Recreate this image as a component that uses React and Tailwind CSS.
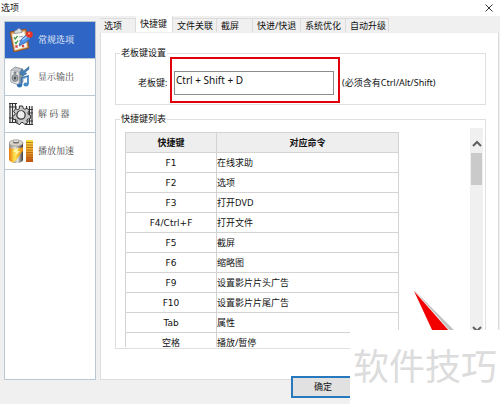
import { useState } from "react";

const ClipboardIcon = () => (
  <svg viewBox="0 0 24 24" className="w-6 h-6 shrink-0">
    <path d="M1 4 17 1 20 20 5 24Z" fill="#d38b48" stroke="#8a4c1c" strokeWidth=".8" />
    <path d="M3 6 15.5 3.500 18 19 6 22Z" fill="#fbfbf5" stroke="#ead2ae" strokeWidth=".6" />
    <path d="M5 5.500 6 2.500 8 2 9 .3 11 .8 12.500 2.500 13 4.500Z" fill="#dcdfe2" stroke="#747982" strokeWidth=".6" />
    <path d="m5 9.500 1.200 1.500L8.500 8M6 14l1 1.500 2-3" fill="none" stroke="#3e9c4c" strokeWidth="1.300" />
    <path d="m6.500 17.500 2 2m0-2-2 2M13 17l2 2m0-2-2 2" stroke="#d23c3c" strokeWidth="1.200" />
    <path d="m10 9 4-.8M10 13l2-.4M10 18l2-.4" stroke="#8e98a5" strokeWidth=".9" />
    <path d="m10 17.500 2.500-6.500 6-5 3.500 4.500-6 4.500Z" fill="#4f93ea" stroke="#2458a8" strokeWidth=".7" />
    <path d="m13.500 12 5.500-4.500" stroke="#a9d0fb" strokeWidth="1.400" />
    <circle cx="20.500" cy="6.500" r="3.300" fill="#ea3428" />
    <circle cx="20" cy="5.500" r="1.100" fill="#ff9384" />
  </svg>
);

const SpeakerIcon = () => (
  <svg viewBox="0 0 24 24" className="w-6 h-6 shrink-0">
    <path d="m2 5 4-3 8 2v13l-4 3-8-3Z" fill="#c3c6ca" stroke="#7b8086" strokeWidth=".7" />
    <path d="m2 5 8 2v13l-8-3Z" fill="#e2e4e6" stroke="#90959a" strokeWidth=".5" />
    <path d="m10 7 4-3v13l-4 3Z" fill="#989da3" />
    <ellipse cx="6" cy="13" rx="3" ry="3.500" fill="#a1a6ac" stroke="#5d6268" strokeWidth=".6" />
    <ellipse cx="6" cy="13" rx="1.200" ry="1.500" fill="#4b5056" />
    <ellipse cx="6" cy="7.800" rx="1.500" ry="1.200" fill="#7d8389" />
    <path d="m11 9 1.500-5 2 2L20 1.500v2.700l-4 3.300 2 1-4 2.500Z" fill="#4681b4" stroke="#285b8c" strokeWidth=".4" />
    <path d="M12.500 20v-7l6.500-2v8" fill="none" stroke="#3475b5" strokeWidth="1.600" />
    <ellipse cx="10.500" cy="20.500" rx="2.600" ry="1.900" fill="#2f70b2" />
    <ellipse cx="17" cy="19.500" rx="2.600" ry="1.900" fill="#4589c7" />
    <path d="m13.500 14 5-1.500" stroke="#8bc0e8" strokeWidth=".8" />
  </svg>
);

const FilmIcon = () => (
  <svg viewBox="0 0 24 24" className="w-6 h-6 shrink-0">
    <g fill="none" stroke="#333" strokeWidth="1.200">
      <path d="M1 1v20M3.500 1v20M6.500 1v20M17.500 4v19M20.500 4v19M23 4v19" />
      <path d="M0 1.500h8M0 5h8M0 16h8M0 20.500h8M16 7.500h8M16 11h8M16 19h8M16 22.500h8" />
    </g>
    <path
      d="m10.300 4 3.400 0 .5 2.400 1.700.8 2.200-1 2.200 2.500-1.400 2 .5 1.800 2.400 1-.5 3.200-2.500.2-1 1.500.8 2.300-2.900 1.700-1.700-1.900-1.800.1-1.500 2-3-1.300.4-2.500-1.200-1.400-2.500.1-.8-3.200 2.200-1.200.3-1.800-1.500-2 2-2.600 2.300.9 1.500-1Z"
      fill="#c9c9c9"
      stroke="#333"
      strokeWidth="1"
    />
    <circle cx="12" cy="13" r="4.200" fill="#eee" stroke="#333" strokeWidth="1.200" />
    <path d="m9.500 10.500 2-1.200 2.800 1" fill="none" stroke="#fff" strokeWidth="1" />
  </svg>
);

const BatteryIcon = () => (
  <svg viewBox="0 0 24 24" className="w-6 h-6 shrink-0">
    <defs>
      <linearGradient id="cell">
        <stop offset="0" stopColor="#e8780f" />
        <stop offset=".4" stopColor="#ffe34d" />
        <stop offset="1" stopColor="#e88a12" />
      </linearGradient>
      <linearGradient id="metal">
        <stop offset="0" stopColor="#8a8a8a" />
        <stop offset=".45" stopColor="#e4e4e4" />
        <stop offset="1" stopColor="#3b3b3b" />
      </linearGradient>
      <linearGradient id="level" x2="0" y2="1">
        <stop offset="0" stopColor="#f6e03b" />
        <stop offset=".5" stopColor="#eda62b" />
        <stop offset="1" stopColor="#c95012" />
      </linearGradient>
    </defs>
    <path d="M0 4v17c2 4 12 4 14 0V4Z" fill="url(#cell)" />
    <path d="M0 4c3 3 11 3 14 0v4c-4 2-10 2-14 1Z" fill="url(#metal)" />
    <path d="M14 12v9c-2 4-8 3.500-10 2.500C8 22 9 17 14 12Z" fill="url(#metal)" />
    <ellipse cx="7" cy="4" rx="7" ry="3.200" fill="#d8d4cb" stroke="#8d8577" strokeWidth=".6" />
    <ellipse cx="7" cy="3" rx="3" ry="1.600" fill="#666" />
    <ellipse cx="7" cy="2.300" rx="2.500" ry="1" fill="#ddd" />
    <path d="m6 10 4-1-2 3h3l-5 5 1-4H4Z" fill="#fff6a8" />
    <path d="M17 1h7v22h-7Z" fill="url(#level)" />
    <path d="M17 3.500h7M17 6h7M17 8.500h7M17 11h7M17 13.500h7M17 16h7M17 18.500h7M17 21h7" stroke="#a35a12" strokeWidth=".7" />
  </svg>
);

const sections = [
  { name: "常规选项", icon: ClipboardIcon },
  { name: "显示输出", icon: SpeakerIcon },
  { name: "解 码 器", icon: FilmIcon },
  { name: "播放加速", icon: BatteryIcon },
];

const tabs = [
  { name: "选项", width: "w-9" },
  { name: "快捷键", width: "w-[37px]" },
  { name: "文件关联", width: "w-11" },
  { name: "截屏", width: "w-9" },
  { name: "快进/快退", width: "w-12" },
  { name: "系统优化", width: "w-[45px]" },
  { name: "自动升级", width: "w-[43px]" },
];

const shortcuts = [
  ["F1", "在线求助"],
  ["F2", "选项"],
  ["F3", "打开DVD"],
  ["F4/Ctrl+F", "打开文件"],
  ["F5", "截屏"],
  ["F6", "缩略图"],
  ["F9", "设置影片片头广告"],
  ["F10", "设置影片片尾广告"],
  ["Tab", "属性"],
  ["空格", "播放/暂停"],
];

const Sidebar = ({ active, onSelect }) => (
  <nav className="w-[92px] shrink-0 bg-white border border-[#b9c7d3]">
    {sections.map(({ name, icon: Icon }, index) => (
      <button
        key={name}
        onClick={() => onSelect(index)}
        className={`flex items-center gap-[5px] w-full h-[37px] pl-1 border-b border-[#b9c7d3] whitespace-pre font-['Noto_Serif_CJK_SC','Noto_Sans_CJK_SC',serif] ${
          index === active ? "bg-[#2f66c5] text-white" : "text-[#444]"
        }`}
      >
        <Icon />
        {name}
      </button>
    ))}
  </nav>
);

const TabBar = ({ active, onSelect }) => (
  <div role="tablist" className="flex items-end h-4">
    {tabs.map(({ name, width }, index) => (
      <button
        key={name}
        role="tab"
        aria-selected={index === active}
        onClick={() => onSelect(index)}
        className={`${width} shrink-0 pl-1 text-left whitespace-nowrap border-r border-[#dcdcdc] ${
          index === active ? "h-4 pb-px bg-white" : "h-[14px] border-t bg-[#f0f0f0]"
        }`}
      >
        {name}
      </button>
    ))}
  </div>
);

const ShortcutTable = () => (
  <table className="w-full table-fixed border-collapse border border-[#d3d3d3]">
    <thead>
      <tr className="h-5 bg-[#eee]">
        <th className="w-1/3 p-0 border border-[#d3d3d3] font-bold">快捷键</th>
        <th className="p-0 border border-[#d3d3d3] font-bold">对应命令</th>
      </tr>
    </thead>
    <tbody>
      {shortcuts.map(([key, command]) => (
        <tr key={key} className="h-5">
          <td className="p-0 border border-[#d3d3d3] text-center font-['DejaVu_Sans','Noto_Sans_CJK_SC',sans-serif]">
            {key}
          </td>
          <td className="p-0 border border-[#d3d3d3]">{command}</td>
        </tr>
      ))}
    </tbody>
  </table>
);

const Scrollbar = () => (
  <div className="flex flex-col w-[13px] shrink-0 bg-[#f0f0f0]">
    <button aria-label="Scroll up" className="flex items-end justify-center h-[25px] pb-[6px]">
      <svg viewBox="0 0 10 7" className="w-[10px] h-[7px]">
        <path d="m1 6 4-4 4 4" fill="none" stroke="#606060" strokeWidth="2" />
      </svg>
    </button>
    <div className="h-8 mx-px bg-[#cacaca]" />
    <button aria-label="Scroll down" className="flex justify-center mt-auto mb-[14px]">
      <svg viewBox="0 0 10 7" className="w-[10px] h-[7px]">
        <path d="m1 1 4 4 4-4" fill="none" stroke="#606060" strokeWidth="2" />
      </svg>
    </button>
  </div>
);

export default function App() {
  const [section, setSection] = useState(0);
  const [tab, setTab] = useState(1);
  const [bossKey, setBossKey] = useState("Ctrl + Shift + D");

  return (
    <div className="relative flex flex-col h-screen overflow-hidden bg-[#f0f0f0] text-[9px] leading-3 text-[#111] font-['Noto_Sans','Noto_Sans_CJK_SC',sans-serif]">
      {/* Title bar */}
      <header className="flex items-center justify-between h-4 shrink-0 pl-px pr-[7px] bg-white">
        <h1>选项</h1>
        <button aria-label="Close">
          <svg viewBox="0 0 8 8" className="w-2 h-2">
            <path d="m.5.5 7 7m0-7-7 7" stroke="#333" strokeWidth="1" />
          </svg>
        </button>
      </header>

      <div className="flex flex-1 min-h-0 gap-1 pl-1 pr-px">
        <div className="flex pt-[5px]">
          <Sidebar active={section} onSelect={setSection} />
        </div>

        <main className="flex flex-col flex-1 min-w-0">
          <TabBar active={tab} onSelect={setTab} />

          <div className="flex flex-col flex-1 min-h-0 gap-2 pt-[14px] pl-[14px] pr-3 pb-[30px] bg-white border border-[#dcdcdc] border-t-[#eee]">
            {/* Boss key */}
            <fieldset className="h-[58px] shrink-0 min-w-0 border border-[#dfdfdf]">
              <legend className="ml-1 px-px">老板键设置</legend>
              <div className="flex items-center pl-[22px] pt-3">
                <label htmlFor="boss-key" className="w-9">
                  老板键:
                </label>
                <div className="relative w-40">
                  <input
                    id="boss-key"
                    value={bossKey}
                    onChange={(e) => setBossKey(e.target.value)}
                    className="block w-full h-6 pl-px pb-[6px] bg-white border border-[#8c8c8c] text-[10px] outline-none"
                  />
                  <div className="absolute -top-[14px] -bottom-2 -left-1 -right-[6px] border-2 border-[#e0000b] pointer-events-none" />
                </div>
                <span className="ml-2 whitespace-nowrap">(必须含有Ctrl/Alt/Shift)</span>
              </div>
            </fieldset>

            {/* Shortcut list */}
            <fieldset className="flex flex-col flex-1 min-h-0 min-w-0 pt-[3px] pb-px pl-[9px] pr-[2px] border border-[#dfdfdf]">
              <legend className="-ml-[5px] px-px">快捷键列表</legend>
              <div className="flex flex-1 min-h-0 justify-between">
                <div className="w-[274px] pt-1 overflow-hidden">
                  <ShortcutTable />
                </div>
                <Scrollbar />
              </div>
            </fieldset>
          </div>
        </main>
      </div>

      <footer className="relative flex justify-center h-6 shrink-0 pl-[146px]">
        <button className="relative -top-1 w-16 h-[22px] bg-[#e1e1e1] border-2 border-[#2878bd]">确定</button>
      </footer>

      {/* Red pointer */}
      <svg viewBox="0 0 46 44" className="absolute right-[44px] bottom-[72px] w-[46px] h-[44px]">
        <path d="m4 2 23 43h20Z" fill="#888" opacity=".5" />
        <path d="m3 1 19 43h19Z" fill="#fff" />
        <path d="m4 3 19 41h17Z" fill="#f20000" />
      </svg>

      {/* Watermark */}
      <div className="absolute right-0 bottom-0 flex justify-center w-[150px] h-[74px] pt-3 bg-white text-[36px] leading-[50px] text-[#dcdcdc] font-normal">
        软件技巧
      </div>
    </div>
  );
}
